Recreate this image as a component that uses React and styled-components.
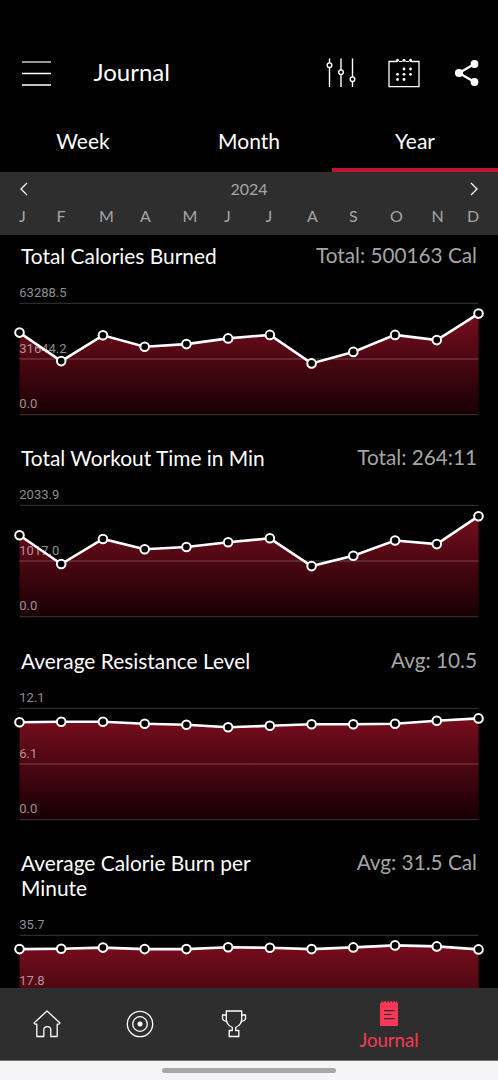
import React from "react";
import styled, { createGlobalStyle } from "styled-components";

const GlobalStyle = createGlobalStyle`
  * { box-sizing: border-box; }
  html, body { margin: 0; background: #000; overflow: hidden; }
`;

const Screen = styled.div`
  display: flex;
  flex-direction: column;
  height: 1080px;
  background: #000;
  color: #fff;
  font-family: Lato, "Liberation Sans", sans-serif;
  overflow: hidden;
`;

const Header = styled.header`
  display: flex;
  align-items: center;
  flex: none;
  height: 65px;
  margin-top: 40px;
  padding: 0 18px 0 22px;
  svg { display: block; flex: none; }
`;

const Heading = styled.h1`
  flex: 1;
  margin: 0 0 1px 42.5px;
  font-size: 24px;
  font-weight: 400;
  line-height: 30px;
`;

const Actions = styled.div`
  display: flex;
  align-items: center;
  gap: 31px;
`;

const Tabs = styled.nav`
  display: flex;
  flex: none;
  height: 67px;
`;

const Tab = styled.div`
  flex: 1;
  display: flex;
  align-items: center;
  justify-content: center;
  padding-top: 7px;
  font-size: 21px;
  border-bottom: 4px solid ${(p) => (p.$active ? "#bd1430" : "transparent")};
`;

const Period = styled.section`
  flex: none;
  height: 62.5px;
  padding: 7px 19px 0;
  background: #2e2e2e;
  color: #a6a6a6;
`;

const YearRow = styled.div`
  display: flex;
  justify-content: space-between;
  align-items: center;
  height: 20px;
  font-size: 16px;
  line-height: 20px;
  svg { display: block; }
`;

const YearLabel = styled.span`
  padding-bottom: 1px;
`;

const Months = styled.div`
  display: grid;
  grid-template-columns: 37.5px 42.5px 41px 42.5px 41.5px 41.5px 41.5px 42px 41px 41.5px 35.5px 12px;
  margin-top: 7px;
  font-size: 16px;
  line-height: 20px;
`;

const Feed = styled.main`
  flex: 1;
  min-height: 0;
  overflow: hidden;
  padding-top: 8.3px;
`;

const Card = styled.article`
  margin-bottom: 26.5px;
`;

const CardHead = styled.div`
  display: flex;
  justify-content: space-between;
  padding: 0 21px;
  font-size: 20.9px;
  line-height: 25px;
`;

const CardTitle = styled.h2`
  margin: 0;
  max-width: 260px;
  font: inherit;
`;

const CardValue = styled.span`
  font-size: 20.75px;
  color: #a6a6a6;
`;

const ChartSvg = styled.svg`
  display: block;
  width: 498px;
  height: 151px;
  text {
    font-family: Roboto, sans-serif;
    font-size: 13px;
    letter-spacing: 0;
    fill: #fff;
    fill-opacity: 0.56;
  }
`;

const BottomNav = styled.nav`
  display: flex;
  flex: none;
  height: 72.5px;
  background: #2e2e2e;
  border-bottom: 1px solid #777;
`;

const NavItem = styled.div`
  width: ${(p) => p.$width}px;
  display: flex;
  flex-direction: column;
  align-items: center;
  justify-content: center;
  gap: 1px;
  padding-top: ${(p) => (p.$active ? 5 : 0)}px;
  color: #fb3857;
  font-size: 18.6px;
  line-height: 24px;
  svg { display: block; }
`;

const GestureBar = styled.div`
  display: flex;
  flex: none;
  justify-content: center;
  height: 19.5px;
  padding-top: 7.5px;
  background: #f5f5f7;
`;

const GestureHandle = styled.div`
  width: 174px;
  height: 5px;
  border-radius: 3px;
  background: #a8a8a8;
`;

const MenuIcon = () => (
  <svg width="29" height="26" fill="none" stroke="#fff">
    <path d="M0 2H29" stroke="#aaa" strokeWidth="1.8" />
    <path d="M0 13.5H29M0 25H29" strokeWidth="1.3" />
  </svg>
);

const SlidersIcon = () => (
  <svg width="31" height="30" fill="none" stroke="#fff" strokeWidth="1.4">
    <path d="M3.5 .5V5M3.5 9V29M15 .5V12.2M15 16.2V29M26.5 .5V19M26.5 23.4V29" />
    <circle cx="3.5" cy="7.2" r="2.3" />
    <circle cx="15" cy="14.2" r="2.3" />
    <circle cx="26.5" cy="21.2" r="2.3" />
  </svg>
);

const CalendarIcon = () => (
  <svg width="32" height="30" fill="none" stroke="#fff" strokeWidth="1.3">
    <path d="M8 3.5H1V28.7H31V3.5H24" />
    <path d="M8 3.5Q9.5 4 9.5 2M11 3.5H14.5M17.5 3.5H21M24 3.5Q22.5 4 22.5 2" strokeWidth="1.1" />
    {[9.5, 16, 22.5].map((x) => <circle key={x} cx={x} cy="2.2" r="1.5" fill="#fff" stroke="none" />)}
    {[[16, 11], [22.5, 11], [9.5, 16.3], [16, 16.3], [22.5, 16.3], [9.5, 21.5], [16, 21.5]].map(([x, y]) => (
      <circle key={`${x}-${y}`} cx={x} cy={y} r="1.4" fill="#fff" stroke="none" />
    ))}
  </svg>
);

const ShareIcon = () => (
  <svg width="29" height="28" fill="#fff" stroke="#fff">
    <path d="M23.5 5L8 14L23.5 23" fill="none" strokeWidth="2.3" />
    <g stroke="none">
      <circle cx="23.5" cy="5" r="3.9" />
      <circle cx="8" cy="14" r="4.1" />
      <circle cx="23.5" cy="23" r="3.9" />
    </g>
  </svg>
);

const Chevron = ({ right }) => (
  <svg width="10" height="14" fill="none" stroke="#fff" strokeWidth="1.3">
    <path d={right ? "M2 1L8 7L2 13" : "M8 1L2 7L8 13"} />
  </svg>
);

const HomeIcon = () => (
  <svg width="28" height="28" fill="none" stroke="#fff" strokeWidth="1.3" strokeLinejoin="round">
    <path d="M14 1L27 13L26 14.2H24.2V26.5H17.8V20C17.8 15.4 10.8 15.4 10.8 20V26.5H3.8V14.2H2L1 13Z" />
  </svg>
);

const TargetIcon = () => (
  <svg width="28" height="28" fill="none" stroke="#fff" strokeWidth="1.3">
    <circle cx="14" cy="14" r="12.7" />
    <circle cx="14" cy="14" r="7.3" />
    <circle cx="14" cy="14" r="2.5" fill="#fff" stroke="none" />
  </svg>
);

const TrophyIcon = () => (
  <svg width="26" height="28" fill="none" stroke="#fff" strokeWidth="1.3" strokeLinejoin="round">
    <path d="M5.3 1H20.7V9C20.7 12.5 19 15.5 14.7 17.5V20.5H17.8V26.5H8.2V20.5H11.3V17.5C7 15.5 5.3 12.5 5.3 9Z" />
    <path d="M5.3 5H1.5V8.5Q1.8 10.8 6 11.5M20.7 5H24.5V8.5Q24.2 10.8 20 11.5" />
  </svg>
);

const NotepadIcon = () => (
  <svg width="20" height="27" fill="none">
    <path d="M1 3.5L2.3 3L2.8 .8H3.4L4.7 3L5.8 .8H6.4L7.7 3L8.8 .8H9.4L10.7 3L11.8 .8H12.4L13.7 3L14.8 .8H15.4L16.7 3L17.4 1H18L18.2 2.6L19 3.5V25.5Q19 26 18.5 26H1.5Q1 26 1 25.5Z" fill="#fb3857" />
    <path d="M5 10.7H15.5M5 14.5H12.5M5 18.6H15.5" stroke="#2e2e2e" strokeWidth="1.2" />
  </svg>
);

const LEFT = 19.5;
const RIGHT = 478.5;
const TOP = 35.4;
const MIDDLE = 91;
const BOTTOM = 146.6;

/* Each value is the point's distance in pixels below the top grid line. */
function Chart({ id, labels, values }) {
  const step = (RIGHT - LEFT) / (values.length - 1);
  const points = values.map((v, i) => [LEFT + i * step, TOP + v]);
  const line = points.map((p) => p.join(",")).join(" ");
  return (
    <ChartSvg viewBox="0 0 498 151">
      <defs>
        <linearGradient id={id} gradientUnits="userSpaceOnUse" x1="0" y1={TOP} x2="0" y2={BOTTOM}>
          <stop offset="0" stopColor="#810e20" />
          <stop offset="1" stopColor="#170004" />
        </linearGradient>
      </defs>
      <polygon points={`${LEFT},${BOTTOM} ${line} ${RIGHT},${BOTTOM}`} fill={`url(#${id})`} />
      {[TOP, MIDDLE, BOTTOM].map((y, i) => (
        <g key={y}>
          <path d={`M${LEFT} ${y}H${RIGHT}`} stroke="#fff" strokeOpacity="0.17" strokeWidth="1.4" />
          {labels[i] && <text x="19.3" y={y - 6.2}>{labels[i]}</text>}
        </g>
      ))}
      <polyline points={line} fill="none" stroke="#fff" strokeWidth="2.6" />
      {points.map(([x, y]) => (
        <circle key={x} cx={x} cy={y} r="4.3" fill="#000" stroke="#fff" strokeWidth="2" />
      ))}
    </ChartSvg>
  );
}

const CHARTS = [
  {
    id: "calories",
    title: "Total Calories Burned",
    value: "Total: 500163 Cal",
    labels: ["63288.5", "31644.2", "0.0"],
    values: [29.2, 57.7, 31.9, 43.4, 40.7, 35, 31.5, 60, 48.5, 31.5, 36.7, 10.2],
  },
  {
    id: "time",
    title: "Total Workout Time in Min",
    value: "Total: 264:11",
    labels: ["2033.9", "1017.0", "0.0"],
    values: [29.9, 58.6, 33.6, 43.8, 41.6, 36.9, 32.9, 60.7, 50.3, 35.1, 38.7, 10.8],
  },
  {
    id: "resistance",
    title: "Average Resistance Level",
    value: "Avg: 10.5",
    labels: ["12.1", "6.1", "0.0"],
    values: [13.9, 13.4, 13.4, 15.4, 16.3, 18.9, 17.4, 15.9, 15.9, 15.4, 12.4, 10],
  },
  {
    id: "burn",
    title: "Average Calorie Burn per Minute",
    value: "Avg: 31.5 Cal",
    labels: ["35.7", "17.8"],
    values: [13.7, 13.4, 12.2, 13.7, 13.7, 11.9, 12.4, 13.7, 12, 10, 11, 14],
  },
];

export default function App() {
  return (
    <Screen>
      <GlobalStyle />
      <Header>
        <MenuIcon />
        <Heading>Journal</Heading>
        <Actions>
          <SlidersIcon />
          <CalendarIcon />
          <ShareIcon />
        </Actions>
      </Header>
      <Tabs>
        <Tab>Week</Tab>
        <Tab>Month</Tab>
        <Tab $active>Year</Tab>
      </Tabs>
      <Period>
        <YearRow>
          <Chevron />
          <YearLabel>2024</YearLabel>
          <Chevron right />
        </YearRow>
        <Months>
          {[..."JFMAMJJASOND"].map((m, i) => <span key={i}>{m}</span>)}
        </Months>
      </Period>
      <Feed>
        {CHARTS.map((c) => (
          <Card key={c.id}>
            <CardHead>
              <CardTitle>{c.title}</CardTitle>
              <CardValue>{c.value}</CardValue>
            </CardHead>
            <Chart id={c.id} labels={c.labels} values={c.values} />
          </Card>
        ))}
      </Feed>
      <BottomNav>
        <NavItem $width={93}><HomeIcon /></NavItem>
        <NavItem $width={94}><TargetIcon /></NavItem>
        <NavItem $width={93}><TrophyIcon /></NavItem>
        <NavItem $width={218} $active>
          <NotepadIcon />
          Journal
        </NavItem>
      </BottomNav>
      <GestureBar><GestureHandle /></GestureBar>
    </Screen>
  );
}
